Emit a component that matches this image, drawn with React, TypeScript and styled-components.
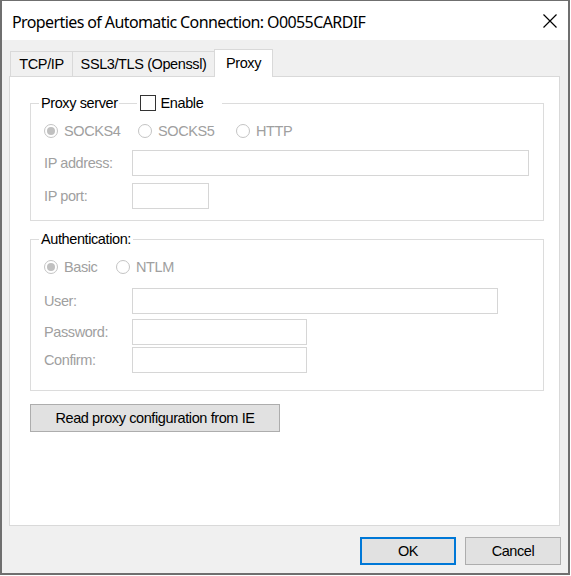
import React from "react";
import styled, { createGlobalStyle } from "styled-components";

const Global = createGlobalStyle`
  html, body { margin: 0; padding: 0; background: #ffffff; }
  body { width: 571px; height: 576px; overflow: hidden; }
  * { box-sizing: border-box; }
`;

const UI_FONT = `"Liberation Sans", Arial, sans-serif`;

const Window = styled.div`
  width: 570px;
  height: 575px;
  background: #f0f0f0;
  border-style: solid;
  border-color: #6f6f6f;
  border-width: 1px 2px 2px 2px;
  display: flex;
  flex-direction: column;
  font-family: ${UI_FONT};
  font-size: 14.5px;
  letter-spacing: -0.4px;
  color: #000;
`;

const TitleBar = styled.div`
  height: 39px;
  flex: none;
  background: #ffffff;
  display: flex;
  align-items: center;
  padding-left: 10px;
`;

const TitleText = styled.div`
  flex: 1;
  font-family: "Noto Sans", "Open Sans", sans-serif;
  font-size: 16px;
  letter-spacing: -0.6px;
  padding-top: 2px;
  white-space: nowrap;
`;

const CloseButton = styled.div`
  width: 36px;
  height: 39px;
  display: flex;
  align-items: center;
  justify-content: center;
`;

const Body = styled.div`
  flex: 1;
  display: flex;
  flex-direction: column;
  padding: 9px 8px 0 7px;
`;

const TabStrip = styled.div`
  display: flex;
  align-items: flex-end;
  height: 27px;
  padding-left: 1px;
`;

const Tab = styled.div<{ $w: number; $active?: boolean }>`
  width: ${(p) => p.$w}px;
  height: ${(p) => (p.$active ? 28 : 25)}px;
  margin-bottom: ${(p) => (p.$active ? -1 : 0)}px;
  margin-right: -1px;
  position: relative;
  z-index: ${(p) => (p.$active ? 1 : 0)};
  background: ${(p) => (p.$active ? "#ffffff" : "#f0f0f0")};
  border: 1px solid #d9d9d9;
  border-bottom: none;
  display: flex;
  align-items: center;
  justify-content: center;
  padding-bottom: ${(p) => (p.$active ? 2 : 0)}px;
  white-space: nowrap;
`;

const Panel = styled.div`
  height: 450px;
  background: #ffffff;
  border: 1px solid #d9d9d9;
  padding: 17px 15px 0 20px;
  display: flex;
  flex-direction: column;
`;

const GroupBox = styled.fieldset<{ $mt?: number; $pb: number }>`
  margin: ${(p) => p.$mt ?? 0}px 0 0 0;
  padding: 0 0 ${(p) => p.$pb}px 13px;
  min-width: 0;
  border: 1px solid #dcdcdc;
`;

const Legend = styled.legend`
  margin-left: -5px;
  padding: 0 2px;
  height: 18px;
  display: flex;
  align-items: center;
  white-space: nowrap;
`;

const LegendLine = styled.span`
  width: 18px;
  height: 1px;
  background: #dcdcdc;
  margin: 0 3px 0 1px;
`;

const CheckBox = styled.span`
  width: 16px;
  height: 16px;
  border: 1px solid #333333;
  background: #ffffff;
  margin-right: 5px;
`;

const LegendTail = styled.span`
  padding-right: 17px;
`;

const RadioRow = styled.div<{ $mt: number }>`
  display: flex;
  align-items: center;
  height: 18px;
  margin-top: ${(p) => p.$mt}px;
`;

const RadioItem = styled.div<{ $w?: number }>`
  display: flex;
  align-items: center;
  width: ${(p) => (p.$w ? `${p.$w}px` : "auto")};
  color: #a0a0a0;
  white-space: nowrap;
`;

const RadioCircle = styled.span<{ $checked?: boolean }>`
  width: 14px;
  height: 14px;
  border-radius: 50%;
  border: 1px solid #c4c4c4;
  background: #ffffff;
  margin-right: 6px;
  display: flex;
  align-items: center;
  justify-content: center;
  flex: none;
  &::after {
    content: "";
    width: 8px;
    height: 8px;
    border-radius: 50%;
    background: ${(p) => (p.$checked ? "#c0c0c0" : "transparent")};
  }
`;

const FieldRow = styled.div<{ $mt: number }>`
  display: flex;
  align-items: center;
  margin-top: ${(p) => p.$mt}px;
`;

const FieldLabel = styled.div`
  width: 88px;
  color: #a0a0a0;
  white-space: nowrap;
`;

const TextBox = styled.div<{ $w: number }>`
  width: ${(p) => p.$w}px;
  height: 26px;
  border: 1px solid #d6d6d6;
  background: #ffffff;
`;

const PushButton = styled.div<{ $w: number; $default?: boolean }>`
  width: ${(p) => p.$w}px;
  height: 28px;
  flex: none;
  background: #e1e1e1;
  border: ${(p) => (p.$default ? "2px solid #0078d7" : "1px solid #adadad")};
  display: flex;
  align-items: center;
  justify-content: center;
  white-space: nowrap;
`;

const ReadButtonRow = styled.div`
  margin-top: 13px;
  display: flex;
`;

const Footer = styled.div`
  display: flex;
  justify-content: flex-end;
  gap: 9px;
  padding-top: 11px;
  margin-right: -1px;
`;

const CloseIcon = () => (
  <svg width="14" height="14" viewBox="0 0 14 14">
    <path d="M0.5 0.5 L13.5 13.5 M13.5 0.5 L0.5 13.5" stroke="#000" strokeWidth="1.2" fill="none" />
  </svg>
);

export default function App() {
  return (
    <>
      <Global />
      <Window>
        <TitleBar>
          <TitleText>Properties of Automatic Connection: O0055CARDIF</TitleText>
          <CloseButton>
            <CloseIcon />
          </CloseButton>
        </TitleBar>
        <Body>
          <TabStrip>
            <Tab $w={63}>TCP/IP</Tab>
            <Tab $w={143}>SSL3/TLS (Openssl)</Tab>
            <Tab $w={59} $active>
              Proxy
            </Tab>
          </TabStrip>
          <Panel>
            <GroupBox $pb={11}>
              <Legend>
                Proxy server
                <LegendLine />
                <CheckBox />
                <LegendTail>Enable</LegendTail>
              </Legend>
              <RadioRow $mt={10}>
                <RadioItem $w={94}>
                  <RadioCircle $checked />
                  SOCKS4
                </RadioItem>
                <RadioItem $w={98}>
                  <RadioCircle />
                  SOCKS5
                </RadioItem>
                <RadioItem>
                  <RadioCircle />
                  HTTP
                </RadioItem>
              </RadioRow>
              <FieldRow $mt={10}>
                <FieldLabel>IP address:</FieldLabel>
                <TextBox $w={397} />
              </FieldRow>
              <FieldRow $mt={7}>
                <FieldLabel>IP port:</FieldLabel>
                <TextBox $w={77} />
              </FieldRow>
            </GroupBox>
            <GroupBox $mt={9} $pb={17}>
              <Legend>Authentication:</Legend>
              <RadioRow $mt={10}>
                <RadioItem $w={72}>
                  <RadioCircle $checked />
                  Basic
                </RadioItem>
                <RadioItem>
                  <RadioCircle />
                  NTLM
                </RadioItem>
              </RadioRow>
              <FieldRow $mt={12}>
                <FieldLabel>User:</FieldLabel>
                <TextBox $w={366} />
              </FieldRow>
              <FieldRow $mt={5}>
                <FieldLabel>Password:</FieldLabel>
                <TextBox $w={175} />
              </FieldRow>
              <FieldRow $mt={2}>
                <FieldLabel>Confirm:</FieldLabel>
                <TextBox $w={175} />
              </FieldRow>
            </GroupBox>
            <ReadButtonRow>
              <PushButton $w={250}>Read proxy configuration from IE</PushButton>
            </ReadButtonRow>
          </Panel>
          <Footer>
            <PushButton $w={96} $default>
              OK
            </PushButton>
            <PushButton $w={96}>Cancel</PushButton>
          </Footer>
        </Body>
      </Window>
    </>
  );
}
